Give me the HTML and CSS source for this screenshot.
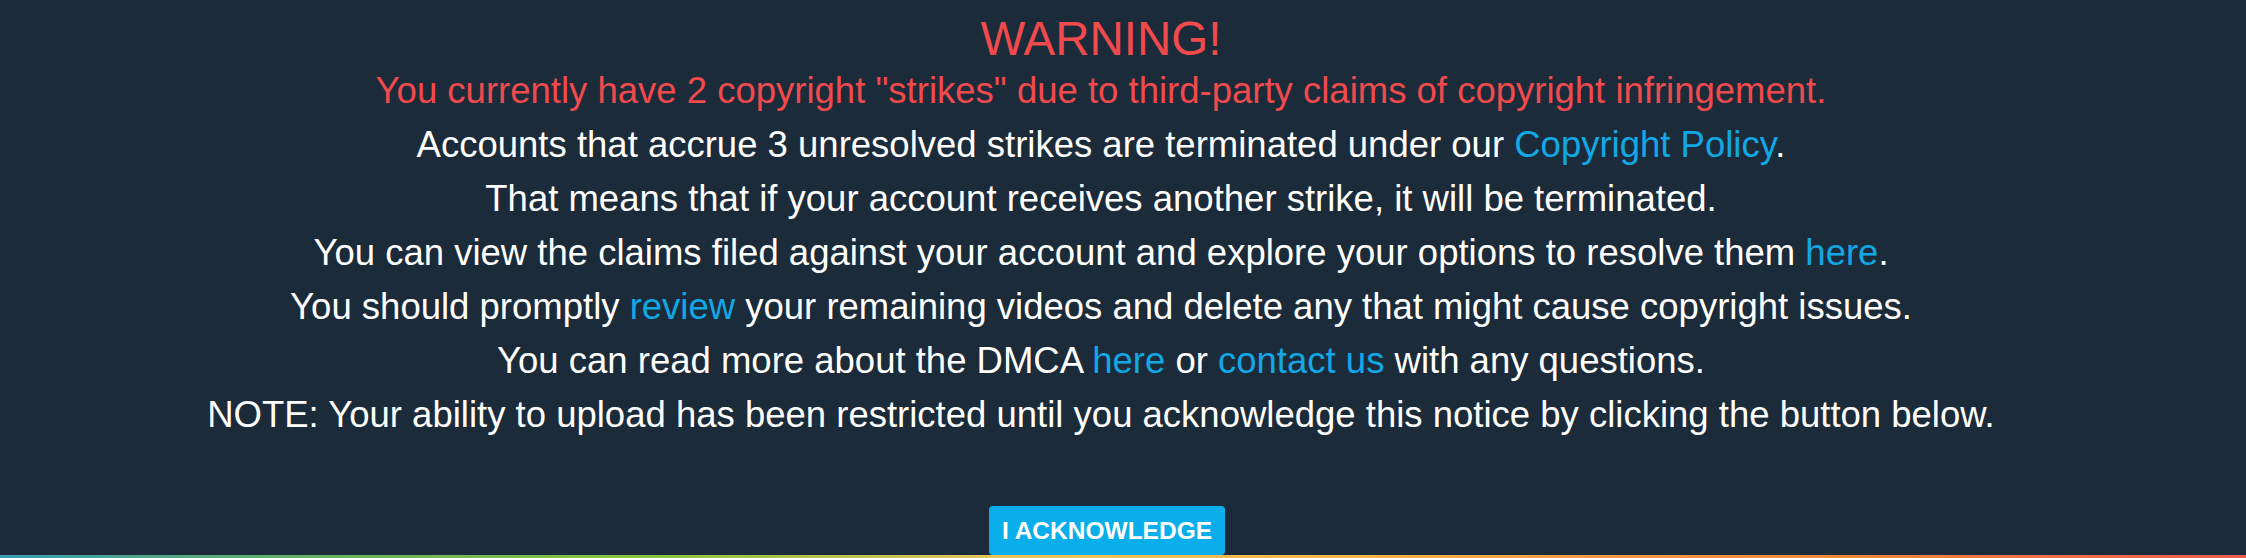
FILE: index.html
```html
<!DOCTYPE html>
<html>
<head>
<meta charset="utf-8">
<link rel="stylesheet" href="styles.css">
</head>
<body>
<div class="page">
  <main class="notice">
    <h1 class="title">WARNING!</h1>
    <p class="line strike">You currently have 2 copyright "strikes" due to third-party claims of copyright infringement.</p>
    <p class="line">Accounts that accrue 3 unresolved strikes are terminated under our <a class="link" href="#">Copyright Policy</a>.</p>
    <p class="line">That means that if your account receives another strike, it will be terminated.</p>
    <p class="line">You can view the claims filed against your account and explore your options to resolve them <a class="link" href="#">here</a>.</p>
    <p class="line">You should promptly <a class="link" href="#">review</a> your remaining videos and delete any that might cause copyright issues.</p>
    <p class="line">You can read more about the DMCA <a class="link" href="#">here</a> or <a class="link" href="#">contact us</a> with any questions.</p>
    <p class="line">NOTE: Your ability to upload has been restricted until you acknowledge this notice by clicking the button below.</p>
    <div class="actions">
      <button class="ack">I ACKNOWLEDGE</button>
    </div>
  </main>
  <div class="rainbow"></div>
</div>
</body>
</html>
```

FILE: styles.css
```css
html, body {
  margin: 0;
  padding: 0;
  background: #1b2b3a;
}
.page {
  height: 558px;
  display: flex;
  flex-direction: column;
  font-family: "Liberation Sans", Arial, sans-serif;
  color: #ffffff;
}
.notice {
  flex: 1;
  display: flex;
  flex-direction: column;
  align-items: center;
  text-align: center;
  padding-top: 14px;
  padding-right: 44px;
}
.title {
  margin: 0;
  font-size: 47.5px;
  font-weight: normal;
  line-height: 50px;
  color: #f04a4d;
}
.line {
  margin: 0;
  font-size: 36.5px;
  line-height: 54px;
  white-space: nowrap;
}
.strike {
  color: #f04a4d;
}
.link {
  color: #12a8e5;
  text-decoration: none;
}
.actions {
  margin-top: auto;
  display: flex;
  justify-content: center;
  padding-left: 12px;
}
.ack {
  width: 236px;
  height: 49px;
  border: none;
  border-radius: 4px;
  background: #0aaeea;
  color: #ffffff;
  font-family: "Liberation Sans", Arial, sans-serif;
  font-weight: bold;
  font-size: 24.5px;
  padding: 0;
}
.rainbow {
  height: 3px;
  background: linear-gradient(90deg, #3a9bb3 0%, #5fae6a 12%, #8cc43f 30%, #e8c45a 45%, #f3b64a 60%, #f08a3c 80%, #ea5b55 100%);
}
```
